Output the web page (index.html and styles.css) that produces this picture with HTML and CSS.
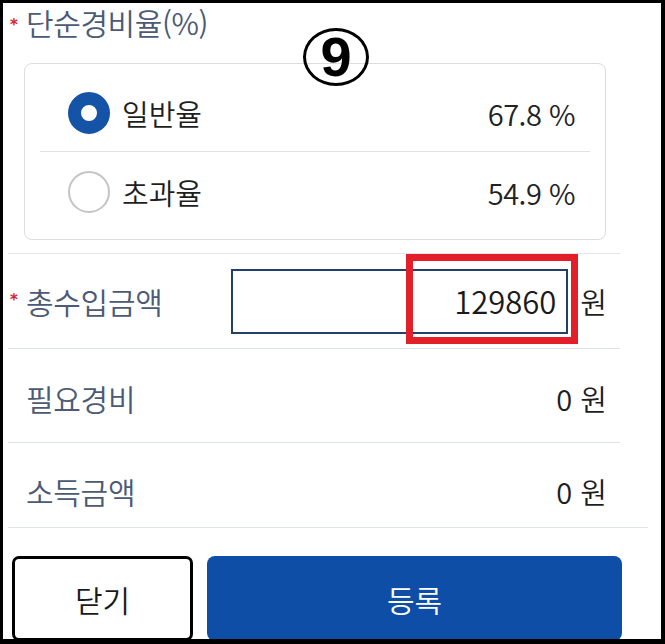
FILE: index.html
```html
<!DOCTYPE html>
<html lang="ko">
<head>
<meta charset="utf-8">
<title>단순경비율</title>
<link rel="stylesheet" href="styles.css">
</head>
<body>
<div class="frame">
  <div class="form">
    <div class="title"><span class="req">*</span>단순경비율(%)</div>
    <div class="card">
      <div class="opt opt-first">
        <span class="radio radio-on"></span>
        <span class="opt-label">일반율</span>
        <span class="opt-val">67.8 %</span>
      </div>
      <div class="opt opt-second">
        <span class="radio"></span>
        <span class="opt-label">초과율</span>
        <span class="opt-val">54.9 %</span>
      </div>
    </div>
    <div class="row row-input">
      <span class="label"><span class="req">*</span>총수입금액</span>
      <div class="input">129860</div>
      <span class="unit">원</span>
    </div>
    <div class="row row-mid">
      <span class="label label-plain">필요경비</span>
      <span class="value">0 원</span>
    </div>
    <div class="row row-last">
      <span class="label label-plain">소득금액</span>
      <span class="value">0 원</span>
    </div>
  </div>
  <div class="actions">
    <button class="btn btn-close">닫기</button>
    <button class="btn btn-submit">등록</button>
  </div>
  <div class="badge">9</div>
  <div class="highlight"></div>
</div>
</body>
</html>
```
FILE: styles.css
```css
* { box-sizing: border-box; }
html, body { margin: 0; padding: 0; background: #000; }
body { font-family: "Noto Sans CJK KR", "Noto Sans", sans-serif; font-weight: 350; }

.frame {
  position: relative;
  width: 665px;
  height: 644px;
  background: #fff;
  border-style: solid;
  border-color: #000;
  border-width: 3px 4px 5px 3px;
  overflow: hidden;
}

.form {
  width: 612px;
  margin-left: 5px;
}

.title {
  height: 37px;
  margin-top: 1px;
  font-size: 30px;
  line-height: 37px;
  color: #4b5a76;
  display: flex;
  align-items: center;
  letter-spacing: -0.4px;
}

.req {
  display: inline-block;
  width: 18px;
  padding-left: 2px;
  color: #d8232a;
  font-family: "DejaVu Sans", sans-serif;
  font-weight: bold;
  font-size: 15px;
  line-height: 15px;
  align-self: flex-start;
  margin-top: 14px;
}

.card {
  margin: 22px 14px 0 16px;
  border: 1px solid #dcdcdc;
  border-radius: 8px;
  padding: 10px 0 7px;
}

.opt {
  display: flex;
  align-items: center;
  margin: 0 15px;
  padding: 0 15px 0 28px;
}
.opt-first { height: 78px; border-bottom: 1px solid #e2e2e2; }
.opt-second { height: 80px; }

.radio {
  width: 42px;
  height: 42px;
  border-radius: 50%;
  border: 2px solid #c4c4c4;
  background: #fff;
  flex: none;
}
.radio-on {
  border: 13px solid #1553a6;
}

.opt-label {
  margin-left: 12px;
  font-size: 29px;
  color: #1e1e1e;
}
.opt-val {
  margin-left: auto;
  font-size: 29px;
  color: #222;
  letter-spacing: -0.5px;
}

.row {
  display: flex;
  align-items: center;
  border-bottom: 1px solid #dfe3ea;
  padding-right: 13px;
}
.row-input {
  margin-top: 13px;
  border-top: 1px solid #e2e5ea;
  height: 96px;
}
.row-mid { height: 94px; padding-top: 4px; }
.row-last { height: 84px; padding-top: 12px; border-bottom: none; }

.label {
  display: flex;
  align-items: center;
  font-size: 30px;
  color: #4b5a76;
  letter-spacing: -0.3px;
}
.label-plain { padding-left: 18px; }

.input {
  margin-left: auto;
  width: 337px;
  height: 65px;
  border: 2px solid #22406c;
  text-align: right;
  padding-right: 10px;
  font-size: 31px;
  line-height: 60px;
  color: #1a1a1a;
}
.unit {
  margin-left: 12px;
  font-size: 29px;
  color: #1e1e1e;
}
.value {
  margin-left: auto;
  font-size: 29px;
  color: #1e1e1e;
}

.actions {
  width: 640px;
  margin-left: 5px;
  border-top: 1px solid #dfe3ea;
  padding: 28px 0 0 4px;
  display: flex;
  gap: 14px;
}
.btn {
  height: 85px;
  font-family: "Noto Sans CJK KR", "Noto Sans", sans-serif;
  font-size: 30px;
  font-weight: 350;
  cursor: pointer;
}
.btn-close {
  width: 181px;
  background: #fff;
  color: #1a1a1a;
  border: 3px solid #000;
  border-radius: 7px;
}
.btn-submit {
  width: 415px;
  background: #0e4ea7;
  color: #fff;
  border: none;
  border-radius: 8px;
}

.badge {
  position: absolute;
  left: 300px;
  top: 25px;
  width: 66px;
  height: 58px;
  border: 3px solid #000;
  border-radius: 50%;
  display: flex;
  align-items: center;
  justify-content: center;
  font-family: "Liberation Sans", Arial, sans-serif;
  font-weight: bold;
  font-size: 56px;
  line-height: 1;
  color: #000;
}

.highlight {
  position: absolute;
  left: 403px;
  top: 251px;
  width: 172px;
  height: 90px;
  border: 7px solid #e3202a;
}
```
